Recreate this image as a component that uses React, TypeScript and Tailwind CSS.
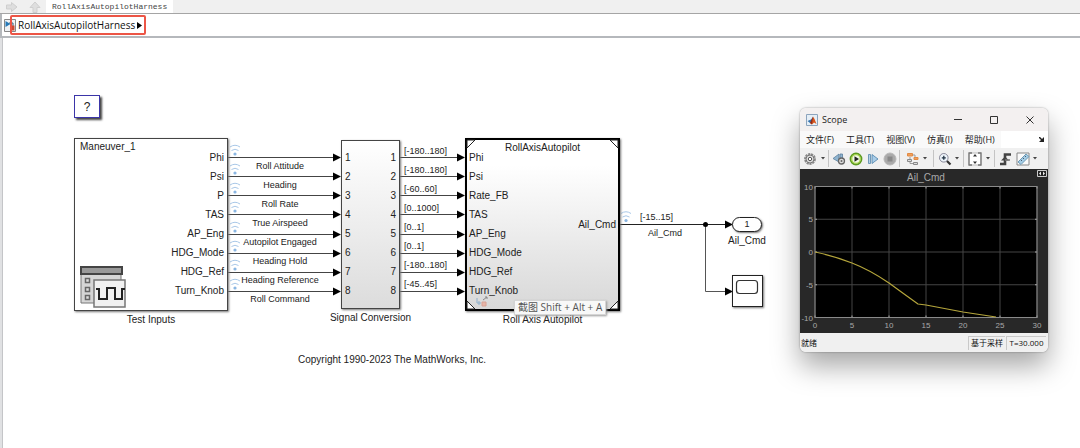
import type { ReactNode } from "react";

const PORTS = ["Phi", "Psi", "P", "TAS", "AP_Eng", "HDG_Mode", "HDG_Ref", "Turn_Knob"];
const MODEL_PORTS = ["Phi", "Psi", "Rate_FB", "TAS", "AP_Eng", "HDG_Mode", "HDG_Ref", "Turn_Knob"];
const SIGNALS = [
  "Roll Attitude",
  "Heading",
  "Roll Rate",
  "True Airspeed",
  "Autopilot Engaged",
  "Heading Hold",
  "Heading Reference",
  "Roll Command",
];
const RANGES = [
  "[-180..180]",
  "[-180..180]",
  "[-60..60]",
  "[0..1000]",
  "[0..1]",
  "[0..1]",
  "[-180..180]",
  "[-45..45]",
];
const MENUS = ["文件(F)", "工具(T)", "视图(V)", "仿真(I)", "帮助(H)"];

const wireY = (i: number) => 119.5 + Math.round(i * 19.14);

function Arrow({ x, y }: { x: number; y: number }) {
  return <path d={`M${x} ${y}l-8 -4v8z`} fill="#000" />;
}

function LogMark({ x, y }: { x: number; y: number }) {
  return (
    <g transform={`translate(${x} ${y})`} fill="none" stroke="#a9c8e8">
      <path d="M-5 -10.500Q0 -14 5 -10.500M-3.500 -7Q0 -9.500 3.500 -7" />
      <circle cx="0" cy="-3.500" r="1.600" fill="#8ab6e2" stroke="none" />
    </g>
  );
}

function Wires() {
  return (
    <svg className="absolute top-0 left-0" width="770" height="300" aria-hidden="true">
      {PORTS.map((port, i) => (
        <g key={port}>
          <path d={`M225 ${wireY(i)}H332M396 ${wireY(i)}H456`} stroke="#444" />
          <Arrow x={338} y={wireY(i)} />
          <Arrow x={462} y={wireY(i)} />
          <LogMark x={232} y={wireY(i)} />
        </g>
      ))}
      <path d="M616 186.500H724" stroke="#222" />
      <path d="M702.500 186V253.500H724" fill="none" stroke="#555" />
      <circle cx="702.500" cy="186.500" r="2.500" />
      <Arrow x={730} y={186.5} />
      <Arrow x={730} y={253.5} />
      <LogMark x={623} y={186} />
    </svg>
  );
}

function PortList({ items, className = "" }: { items: string[]; className?: string }) {
  return (
    <ul className={`flex h-[153px] flex-col ${className}`}>
      {items.map((item, i) => (
        <li key={i} className="flex flex-1 items-center leading-3 whitespace-nowrap">
          {item}
        </li>
      ))}
    </ul>
  );
}

function GeneratorIcon() {
  return (
    <svg width="47" height="43" viewBox="0 0 47 43" aria-hidden="true">
      <path d="M1 8h40v29H1z" fill="#d6d6d6" stroke="#777" />
      <path d="M1 1h41v7H1z" fill="#999" stroke="#444" strokeWidth="2" />
      <path d="M5.500 12.500h4v4h-4zM5.500 21.500h4v4h-4zM5.500 29.500h4v4h-4z" fill="#ddd" stroke="#666" strokeWidth="1.500" />
      <path d="M14 14h31v27H14z" fill="#f1f1f1" stroke="#777" strokeWidth="1.500" />
      <path d="M16 23h3v10h8V22h8v11h7V23h3" fill="none" stroke="#222" strokeWidth="2" />
    </svg>
  );
}

function MatlabIcon() {
  return (
    <svg width="12" height="12" viewBox="0 0 12 12" aria-hidden="true">
      <path d="M.500.500h11v11H.500z" fill="#e5eef6" stroke="#8ca4bd" />
      <path d="M1.500 7L5 5.500 7 3 6.500 7.500 4 9z" fill="#3673ae" />
      <path d="M4 9l2-2.500L7 2.500 8.500 5l2 5L8 8.500 6 10.500z" fill="#d7541b" />
      <path d="M7 2.500L6 10.500 4 9z" fill="#8e2a17" />
    </svg>
  );
}

function ModelIcon() {
  return (
    <svg width="12" height="13" viewBox="0 0 12 13" aria-hidden="true">
      <path d="M.500.500h11v12H.500z" fill="#eef1f4" stroke="#888" />
      <path d="M1.500 2l5 3-5 3z" fill="#2579b8" />
      <path d="M5 4h4v3" fill="none" stroke="#38657f" />
      <path d="M6.500 6.500h4v5h-4z" fill="#cb4b32" />
    </svg>
  );
}

function ToolButton({ label, children }: { label: string; children: ReactNode }) {
  return (
    <button type="button" aria-label={label} className="flex h-4 w-[17px] items-center justify-center">
      <svg width="14" height="14" viewBox="0 0 14 14" fill="none" aria-hidden="true">
        {children}
      </svg>
    </button>
  );
}

function Caret({ label }: { label: string }) {
  return (
    <button type="button" aria-label={label} className="flex h-4 w-2 items-center justify-center">
      <svg width="4" height="3" viewBox="0 0 4 3" aria-hidden="true">
        <path d="M0 0h4L2 2.500z" fill="#444" />
      </svg>
    </button>
  );
}

function Toolbar() {
  return (
    <div className="flex h-[21px] items-center bg-[#f0f0f0] [&>div]:flex [&>div]:h-[17px] [&>div]:items-center [&>div]:justify-center [&>div+div]:border-l [&>div+div]:border-[#c4c4c4]">
      <div className="w-7">
        <ToolButton label="Configuration">
          <circle cx="7" cy="7" r="5" stroke="#888" strokeWidth="1.800" strokeDasharray="2.200 .8" />
          <circle cx="7" cy="7" r="4" fill="#ddd" stroke="#777" />
          <circle cx="7" cy="7" r="1.700" fill="#fff" stroke="#555" />
        </ToolButton>
        <Caret label="Configuration options" />
      </div>
      <div className="w-[71px]">
        <ToolButton label="Step back">
          <path d="M1 6.500L7 2v8zM8 2h2.500v8H8z" fill="#90b5d0" stroke="#5a7f9d" strokeWidth=".8" />
          <circle cx="9.500" cy="9" r="3" fill="#ddd" stroke="#666" strokeWidth="1.300" />
          <circle cx="9.500" cy="9" r="1" fill="#666" />
        </ToolButton>
        <ToolButton label="Run">
          <circle cx="7" cy="7" r="5.500" fill="#f3fae6" stroke="#5c9a21" strokeWidth="1.800" />
          <circle cx="7" cy="7" r="4.300" stroke="#a8d44f" strokeWidth="1.300" />
          <path d="M5.500 4.200L10 7l-4.500 2.800z" fill="#222" />
        </ToolButton>
        <ToolButton label="Step forward">
          <path d="M2.500 2.500h2v9h-2z" fill="#b5d2e7" stroke="#5687ac" strokeWidth=".8" />
          <path d="M6 2.500L12 7l-6 4.500z" fill="#a9cde8" stroke="#4d82aa" strokeWidth=".8" />
        </ToolButton>
        <ToolButton label="Stop">
          <circle cx="7" cy="7" r="6" fill="#aaa" stroke="#b8b8b8" />
          <rect x="4.500" y="4.500" width="5" height="5" fill="#888" />
        </ToolButton>
      </div>
      <div className="w-[34px]">
        <ToolButton label="Signal selector">
          <path d="M1.500 1.500h5v2.500h-5z" fill="#f3a05a" stroke="#e08a45" />
          <path d="M7 3h2v3M4 5v6.500h3" stroke="#999" />
          <path d="M8 5.500h4v2H8z" fill="#f3a05a" stroke="#e08a45" />
          <path d="M1.500 7.500h4v2h-4zM7.500 10.500h4v2h-4z" fill="#ddd" stroke="#888" />
        </ToolButton>
        <Caret label="Signal options" />
      </div>
      <div className="w-[30px]">
        <ToolButton label="Zoom">
          <circle cx="5.800" cy="5.800" r="4.300" fill="#edf4fa" stroke="#889" />
          <path d="M3.800 5.800h4M5.800 3.800v4" stroke="#234" strokeWidth="1.300" />
          <path d="M9 9l3.500 3.500" stroke="#333" strokeWidth="2.200" />
        </ToolButton>
        <Caret label="Zoom options" />
      </div>
      <div className="w-[31px]">
        <ToolButton label="Scale axes">
          <path d="M1 1h12v12H1z" fill="#fff" stroke="#bbb" />
          <path d="M4 1H1v12h3M10 1h3v12h-3" stroke="#777" strokeWidth="1.300" />
          <path d="M7 2L9 4.500H5zM7 12L9 9.500H5z" fill="#333" />
        </ToolButton>
        <Caret label="Scale options" />
      </div>
      <div className="w-[47px]">
        <ToolButton label="Triggers">
          <path d="M1 12h5V2.500h6" stroke="#444" strokeWidth="2.600" />
          <path d="M2 8.500l4-4 4 4z" fill="#444" />
          <path d="M6 8h5" stroke="#777" strokeWidth="1.500" />
        </ToolButton>
        <ToolButton label="Measurements">
          <path d="M1 1h12v12H1z" fill="#fafafa" stroke="#888" />
          <path d="M2 10l8-8 3 2.500L5 12.500z" fill="#a4cde6" stroke="#6f9ab5" />
          <path d="M5 8l1 1M7 6l1 1M9 4l1 1" stroke="#345" strokeWidth=".8" />
        </ToolButton>
        <Caret label="Measurement options" />
      </div>
    </div>
  );
}

const X_TICKS = [0, 5, 10, 15, 20, 25, 30];
const Y_TICKS = [10, 5, 0, -5, -10];

function Plot() {
  const px = (v: number) => 15 + v * 7.4;
  const py = (v: number) => 83 - v * 6.55;
  return (
    <svg
      className="block w-full bg-[#282828]"
      viewBox="0 0 248 164"
      fontFamily="Liberation Sans, sans-serif"
      fontSize="8"
      fill="#a9a9a9"
      role="img"
      aria-label="Ail_Cmd"
    >
      <rect x="15" y="17.500" width="222" height="131" fill="#000" />
      {X_TICKS.map((v) => (
        <g key={v}>
          <path d={`M${px(v)} 17.500V148.500`} stroke="#444" />
          <path d={`M${px(v)} 17.500v2M${px(v)} 148.500v-2`} stroke="#aaa" />
          <text x={px(v)} y="159" textAnchor="middle">{v}</text>
        </g>
      ))}
      {Y_TICKS.map((v) => (
        <g key={v}>
          <path d={`M15 ${py(v)}H237`} stroke="#444" />
          <path d={`M15 ${py(v)}h2M237 ${py(v)}h-2`} stroke="#aaa" />
          <text x="13" y={py(v) + 3} textAnchor="end">{v}</text>
        </g>
      ))}
      <rect x="15" y="17.500" width="222" height="131" fill="none" stroke="#8a8a8a" />
      <path
        d="M15 83Q34 87 52 94T89 114Q104 125 118 135L126 136 163 143 196 148"
        fill="none"
        stroke="#b5a63c"
        strokeWidth="1.200"
      />
      <text x="126" y="12" fontSize="10" textAnchor="middle">Ail_Cmd</text>
      <path d="M237.500 1.500h9v6h-9z" fill="#222" stroke="#ccc" />
      <path d="M239 4.500l2-2v4zM245 4.500l-2-2v4z" fill="#eee" />
    </svg>
  );
}

function ScopeWindow() {
  return (
    <section
      aria-label="Scope"
      className="absolute top-[70px] left-[797px] w-[248px] overflow-hidden rounded-md font-['Open_Sans','Noto_Sans_CJK_SC',sans-serif] text-[9px] text-[#222] shadow-[0_14px_28px_rgba(0,0,0,0.35),0_0_2px_rgba(0,0,0,0.4)]"
    >
      <header className="flex h-[23px] items-center bg-[#f3f0f0] pl-1.5">
        <MatlabIcon />
        <h1 className="ml-1 flex-1">Scope</h1>
        <button type="button" aria-label="Minimize" className="flex w-9 justify-center">
          <svg width="8" height="8" viewBox="0 0 8 8" stroke="#333"><path d="M0 3.500h8" /></svg>
        </button>
        <button type="button" aria-label="Maximize" className="flex w-9 justify-center">
          <svg width="8" height="8" viewBox="0 0 8 8" fill="none" stroke="#333"><path d="M.500.500h7v7h-7z" /></svg>
        </button>
        <button type="button" aria-label="Close" className="flex w-9 justify-center">
          <svg width="8" height="8" viewBox="0 0 8 8" stroke="#333"><path d="M.500.500l7 7M7.500.500l-7 7" /></svg>
        </button>
      </header>
      <div className="flex h-[17px] items-center justify-between bg-white pr-1">
        <nav className="flex h-full items-center gap-3 bg-[#f9f9f9] pr-1.5 pl-1.5">
          {MENUS.map((menu) => (
            <button key={menu} type="button" className="leading-3 whitespace-nowrap">
              {menu}
            </button>
          ))}
        </nav>
        <svg width="5" height="5" viewBox="0 0 5 5" aria-hidden="true">
          <path d="M0 0l3 3" stroke="#222" strokeWidth="1.500" />
          <path d="M5 0v5H0z" fill="#222" />
        </svg>
      </div>
      <Toolbar />
      <Plot />
      <footer className="flex h-[19px] items-center gap-px bg-[#f0f0f0] pr-0.5 pl-px text-[8px] text-[#111]">
        <span className="flex-1">就绪</span>
        <span className="h-3.5 w-[37px] border-t border-l border-[#c9c9c9] text-center leading-3 whitespace-nowrap">基于采样</span>
        <span className="h-3.5 w-10 border-t border-l border-[#c9c9c9] text-center leading-3">T=30.000</span>
      </footer>
    </section>
  );
}

function Diagram() {
  return (
    <main className="relative flex-1 overflow-hidden bg-white font-['Liberation_Sans',Arial,sans-serif] text-[10px] text-[#222]">
      <Wires />

      <button
        type="button"
        aria-label="Model help"
        className="absolute top-[57px] left-[71px] h-[23px] w-[26px] border border-[#3b35a8] bg-white text-xs leading-5 shadow-[2px_2px_2px_#444]"
      >
        ?
      </button>

      <figure className="absolute top-[100px] left-[71px] w-[154px]">
        <div className="flex h-[173px] justify-between border border-[#444] bg-white px-[3px] shadow-[1px_1px_2px_#777]">
          <div className="flex flex-col justify-between pt-0.5 pb-px pl-0.5">
            <span className="leading-3">Maneuver_1</span>
            <GeneratorIcon />
          </div>
          <PortList items={PORTS} className="mt-[9px] [&>li]:justify-end" />
        </div>
        <figcaption className="mt-[3px] text-center leading-3">Test Inputs</figcaption>
      </figure>

      <PortList items={SIGNALS} className="absolute top-[118px] left-[225px] w-[104px] text-[9px] [&>li]:justify-center" />

      <figure className="absolute top-[102px] left-[338px] flex w-[59px] flex-col items-center">
        <div className="flex h-[169px] w-full justify-between border border-[#444] bg-linear-to-b from-white to-[#dcdcdc] px-[3px] pt-[7px] shadow-[1px_1px_2px_#777]">
          <PortList items={["1", "2", "3", "4", "5", "6", "7", "8"]} />
          <PortList items={["1", "2", "3", "4", "5", "6", "7", "8"]} />
        </div>
        <figcaption className="mt-[3px] leading-3 whitespace-nowrap">Signal Conversion</figcaption>
      </figure>

      <PortList items={RANGES} className="absolute top-[103px] left-[401px] text-[9px]" />

      <figure className="absolute top-[100px] left-[462px] w-[155px]">
        <div className="h-[173px] border-2 border-black bg-linear-to-b from-white from-15% to-[#d8d8d8] shadow-[1px_1px_2px_#777]">
          <p className="h-2 text-center leading-4">RollAxisAutopilot</p>
          <div className="flex items-center justify-between px-0.5">
            <PortList items={MODEL_PORTS} />
            <span className="leading-3">Ail_Cmd</span>
          </div>
          <svg className="absolute top-0 left-0" width="155" height="173" fill="none" stroke="#222" aria-hidden="true">
            <path d="M2 10l8-8H2zM145 2l8 8V2zM2 163l8 8H2zM145 171l8-8v8z" fill="#fff" />
            <path d="M12 160v5h4M14 163v4" stroke="#8fb0cc" />
            <path d="M17 164h4v4h-4z" fill="#e7b5a8" stroke="#d8a294" />
            <path d="M18 162l4-3M20 159h2v2" stroke="#888" />
          </svg>
        </div>
        <figcaption className="mt-[3px] text-center leading-3">Roll Axis Autopilot</figcaption>
      </figure>

      <div
        role="tooltip"
        className="absolute top-[262px] left-[511px] border border-[#d5d5d5] bg-[#f8f8f8] px-[3px] font-['Open_Sans','Noto_Sans_CJK_SC',sans-serif] leading-[13px] whitespace-nowrap text-[#555] shadow-[1px_1px_2px_#999]"
      >
        截图 Shift + Alt + A
      </div>

      <div className="absolute top-[173px] left-[637px] flex flex-col gap-1 text-[9px] leading-3">
        <span>[-15..15]</span>
        <span className="pl-2">Ail_Cmd</span>
      </div>

      <figure className="absolute top-[179px] left-[724px] flex w-10 flex-col items-center">
        <div className="h-[15px] w-[30px] rounded-full border border-[#222] bg-white text-center text-[9px] leading-[13px] shadow-[1px_1px_2px_#777]">
          1
        </div>
        <figcaption className="mt-[3px] leading-3">Ail_Cmd</figcaption>
      </figure>

      <svg
        className="absolute top-[237px] left-[729px] border border-[#222] bg-white shadow-[1px_1px_2px_#777]"
        width="31"
        height="32"
        fill="none"
        stroke="#333"
        role="img"
        aria-label="Scope block"
      >
        <rect x="3.500" y="4.500" width="21" height="13" rx="3" strokeWidth="1.200" />
      </svg>

      <p className="absolute top-[316px] left-[295px] leading-3">Copyright 1990-2023 The MathWorks, Inc.</p>

      <ScopeWindow />
    </main>
  );
}

export default function App() {
  return (
    <div className="flex min-h-screen flex-col bg-white">
      <header>
        <div className="flex h-3.5 items-center border-b border-[#a5a5a5] bg-[#f0f0f0] pl-1.5">
          <button type="button" aria-label="Forward" className="w-[23px]">
            <svg width="12" height="12" viewBox="0 0 12 12" fill="#dedede" stroke="#cfcfcf" aria-hidden="true">
              <path d="M.500 4h5V1.500L11 6l-5.500 4.500V8h-5z" />
            </svg>
          </button>
          <button type="button" aria-label="Up to parent" className="w-[17px]">
            <svg width="12" height="12" viewBox="0 0 12 12" fill="#dedede" stroke="#cfcfcf" aria-hidden="true">
              <path d="M4 11.500v-5H1L6 1l5 5.500H8v5z" />
            </svg>
          </button>
          <button
            type="button"
            className="h-[13px] bg-white px-1.5 font-['Liberation_Mono',monospace] text-[8px] leading-[13px] text-[#444]"
          >
            RollAxisAutopilotHarness
          </button>
        </div>
        <nav className="flex h-6 items-center border-b-2 border-l-2 border-[#b5b8bc] bg-white pl-0.5">
          <ModelIcon />
          <button
            type="button"
            className="-ml-1.5 flex h-5 items-center gap-0.5 rounded-xs border-2 border-[#ec5546] px-1.5 pr-0.5 font-['Open_Sans',sans-serif] text-[10px] text-[#111]"
          >
            RollAxisAutopilotHarness
            <svg width="5" height="7" viewBox="0 0 5 7" aria-hidden="true">
              <path d="M0 0l5 3.500L0 7z" />
            </svg>
          </button>
        </nav>
      </header>
      <div className="flex flex-1">
        <div className="w-[3px] border-r border-[#c4c5c8] bg-[#e0e1e3]" />
        <Diagram />
      </div>
    </div>
  );
}
